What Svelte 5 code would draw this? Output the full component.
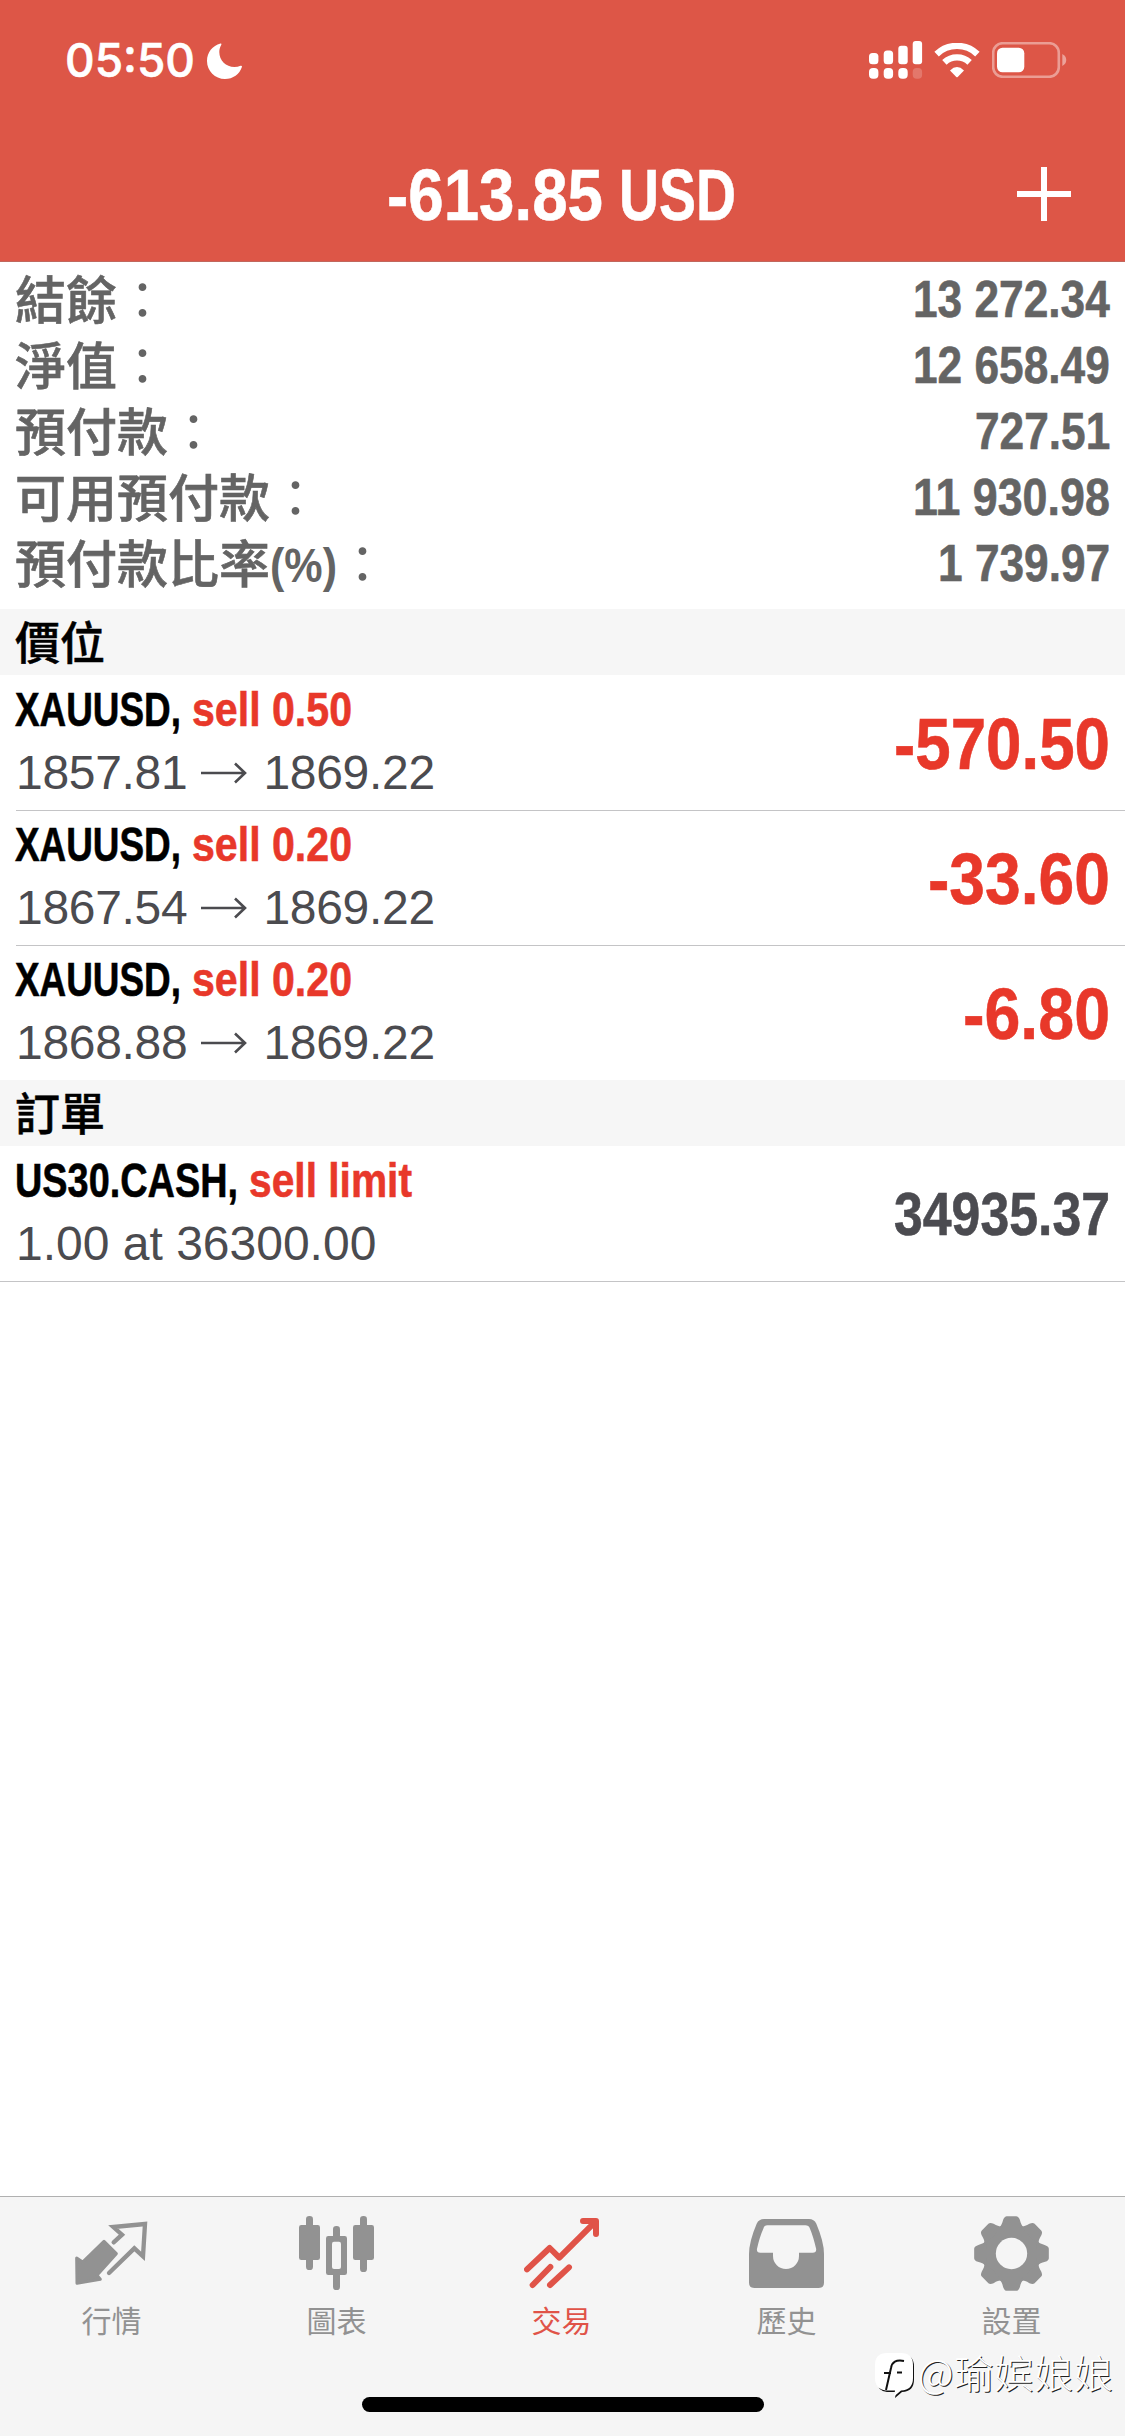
<script lang="ts">
	interface Position {
		symbol: string;
		symbolWidth: number;
		action: string;
		open: string;
		current: string;
		profit: string;
		profitWidth: number;
	}

	const account = [
		{ label: '結餘', unit: '', value: '13 272.34' },
		{ label: '淨值', unit: '', value: '12 658.49' },
		{ label: '預付款', unit: '', value: '727.51' },
		{ label: '可用預付款', unit: '', value: '11 930.98' },
		{ label: '預付款比率', unit: '(%)', value: '1 739.97' }
	];

	const positions: Position[] = [
		{ symbol: 'XAUUSD,', symbolWidth: 166, action: 'sell 0.50', open: '1857.81', current: '1869.22', profit: '-570.50', profitWidth: 216 },
		{ symbol: 'XAUUSD,', symbolWidth: 166, action: 'sell 0.20', open: '1867.54', current: '1869.22', profit: '-33.60', profitWidth: 182 },
		{ symbol: 'XAUUSD,', symbolWidth: 166, action: 'sell 0.20', open: '1868.88', current: '1869.22', profit: '-6.80', profitWidth: 147 }
	];

	const tabs = [
		{ id: 'quotes', label: '行情' },
		{ id: 'chart', label: '圖表' },
		{ id: 'trade', label: '交易' },
		{ id: 'history', label: '歷史' },
		{ id: 'settings', label: '設置' }
	];

	const active = 'trade';
	const teeth = [0, 45, 90, 135, 180, 225, 270, 315];

	// digits take 24.6px, spaces and dots half of that
	function valueWidth(value: string) {
		const digits = value.replace(/\D/g, '').length;
		return digits * 24.6 + (value.length - digits) * 12.3;
	}

	// condense a line of text to the given width
	function squeeze(node: HTMLElement, width: number) {
		const natural = node.getBoundingClientRect().width;
		node.style.transform = `scaleX(${width / natural})`;
	}
</script>

{#snippet fit(text: string, width: number, cls: string)}
	<span class="fit {cls}" style:width="{width}px"><span use:squeeze={width}>{text}</span></span>
{/snippet}

<div class="screen">
	<header>
		<div class="status">
			<div class="clock">
				{@render fit('05:50', 130, 'time')}
				<svg class="moon" viewBox="0 0 35 36">
					<path d="M13.5 0.6C5.5 2.6 0 9.6 0 18c0 10 8 18 18 18 8 0 14.600-4.800 16.900-12 .3-1-.4-1.600-1.300-1.200-2 .8-4 1.200-6.200 1.200C19 24 12.300 17.500 12.300 9c0-2.500.6-4.900 1.900-7.100C14.800.9 14.400.4 13.500.6z" />
				</svg>
			</div>
			<div class="indicators">
				<svg class="signal" viewBox="0 0 54 38">
					<rect x="0" y="12" width="9.400" height="11.300" rx="3.500" />
					<rect x="14.700" y="9.400" width="9.400" height="13.900" rx="3.500" />
					<rect x="29.300" y="4.700" width="9.400" height="18.600" rx="3" />
					<rect x="43.700" y="0" width="9.400" height="23.300" rx="3" />
					<rect x="0" y="27" width="9.400" height="10.700" rx="4" />
					<rect x="14.700" y="27" width="9.400" height="10.700" rx="4" />
					<rect x="29.300" y="27" width="9.400" height="10.700" rx="4" />
					<rect x="43.700" y="27" width="9.400" height="10.700" rx="4" opacity="0.2" />
				</svg>
				<svg class="wifi" viewBox="0 0 46 35">
					<path d="M2.600 11.100a29.500 29.500 0 0 1 40.800 0" fill="none" stroke="#fff" stroke-width="6.400" />
					<path d="M10.400 19.400a18.300 18.300 0 0 1 25.200 0" fill="none" stroke="#fff" stroke-width="6.400" />
					<path d="M16 27.400q7-6.800 14 0L23.700 34q-.7.600-1.400 0z" />
				</svg>
				<svg class="battery" viewBox="0 0 75 36">
					<rect x="1.200" y="1.200" width="65.600" height="33.600" rx="9.500" fill="none" stroke="#fff" stroke-opacity="0.42" stroke-width="2.600" />
					<rect x="5" y="5.700" width="27.300" height="24.600" rx="5.500" />
					<path d="M70.300 12c5.300 2.500 5.300 9.500 0 12z" opacity="0.45" />
				</svg>
			</div>
		</div>
		<div class="titlebar">
			<div class="total">
				{@render fit('-613.85', 216, 'title')}
				{@render fit('USD', 117, 'title')}
			</div>
			<svg class="plus" viewBox="0 0 54 54"><path d="M24 0h6v24h24v6H30v24h-6V30H0v-6h24z" /></svg>
		</div>
	</header>

	<main>
		<section class="account">
			{#each account as row}
				<div class="account-row">
					<div class="label">
						<span>{row.label}</span>
						{#if row.unit}
							{@render fit(row.unit, 67, 'unit')}
						{/if}
						<span class="colon">：</span>
					</div>
					{@render fit(row.value, valueWidth(row.value), 'amount')}
				</div>
			{/each}
		</section>

		<h2>價位</h2>
		<ul>
			{#each positions as p}
				<li>
					<div class="info">
						<div class="name">
							{@render fit(p.symbol, p.symbolWidth, 'symbol')}
							{@render fit(p.action, 160, 'action')}
						</div>
						<div class="prices">
							<span>{p.open}</span>
							<svg class="arrow" viewBox="0 0 46 22"><path d="M0 11h44M34 1.500l10 9.500-10 9.500" /></svg>
							<span>{p.current}</span>
						</div>
					</div>
					<div class="profit">{@render fit(p.profit, p.profitWidth, 'big')}</div>
				</li>
			{/each}
		</ul>

		<h2>訂單</h2>
		<ul class="orders">
			<li>
				<div class="info">
					<div class="name">
						{@render fit('US30.CASH,', 223, 'symbol')}
						{@render fit('sell limit', 163, 'action')}
					</div>
					<div class="prices pending">1.00 at 36300.00</div>
				</div>
				<div class="profit">{@render fit('34935.37', 216, 'market')}</div>
			</li>
		</ul>
	</main>

	<footer>
		<nav>
			{#each tabs as tab}
				<div class="tab" class:active={tab.id === active}>
					{#if tab.id === 'quotes'}
						<svg class="icon" viewBox="222 108 225 225">
							<path d="M312 184L349 221 291 286 301 298 231 310 230 234 248 246z" stroke="currentColor" stroke-width="9" stroke-linejoin="round" />
							<path d="M341 187L366 164 340 141 435 132 429 229 403 205 327 279" fill="none" stroke="currentColor" stroke-width="13" stroke-linecap="round" />
						</svg>
					{:else if tab.id === 'chart'}
						<svg class="icon" viewBox="897 108 225 225">
							<rect x="897" y="135" width="63" height="105" rx="7" />
							<rect x="918" y="108" width="21" height="162" rx="10" />
							<rect x="999" y="138" width="21" height="192" rx="10" />
							<rect x="978" y="168" width="63" height="117" rx="7" />
							<rect class="hole" x="996" y="185" width="27" height="82" rx="6" />
							<rect x="1059" y="135" width="63" height="105" rx="7" />
							<rect x="1080" y="108" width="21" height="168" rx="10" />
						</svg>
					{:else if tab.id === 'trade'}
						<svg class="icon" viewBox="192 108 225 225" stroke="currentColor" stroke-width="18" stroke-linecap="round" stroke-linejoin="round">
							<path fill="none" d="M201 268L269 204 298 233 404 127M369 123H408V162M218 315L271 261M270 315L327 262" />
							<path stroke="none" d="M385 123H408V147z" />
						</svg>
					{:else if tab.id === 'history'}
						<svg class="icon" viewBox="867 108 225 225">
							<path fill-rule="evenodd" d="M912 117H1047Q1062 117 1069 131Q1092 185 1092 222V308Q1092 324 1076 324H883Q867 324 867 308V222Q867 185 890 131Q897 117 912 117zM922 136Q913 136 910 146Q899 170 891 206Q889 218 901 218H939V228A39 39 0 0 0 1017 228V218H1058Q1071 218 1068 205Q1060 170 1050 146Q1046 136 1036 136z" />
						</svg>
					{:else}
						<svg class="icon" viewBox="-112.500 -112.500 225 225">
							<circle r="88" />
							{#each teeth as angle}
								<path transform="rotate({angle})" d="M-38-76C-30-84-28-90-25-101Q-21-112-14-112H14Q21-112 25-101C28-90 30-84 38-76z" />
							{/each}
							<circle class="hole" r="47" />
						</svg>
					{/if}
					<span>{tab.label}</span>
				</div>
			{/each}
		</nav>
		<div class="home"></div>
	</footer>

	<div class="watermark">
		<svg viewBox="0 0 40 47">
			<path class="shade" d="M13 1.500h14q12 0 12 12v13q0 12-12 12.500l-7 6 1-6h-9q-10-1-10-12V13q0-11.500 11-11.500z" />
			<path class="bubble" d="M12 0h14q12 0 12 12v13q0 12-12 12.500l-7 6 1-6h-9Q0 36 0 25V12Q0 0 12 0z" />
			<path class="mark" d="M29 8c-8-1.500-12 1-13 7L11 37M9 20h7M22 19.500h5" />
		</svg>
		<span>@瑜嫔娘娘</span>
	</div>
</div>

<style>
	:global(body) {
		background: #fff;
	}

	.screen {
		position: relative;
		display: flex;
		flex-direction: column;
		width: 1125px;
		height: 2436px;
		overflow: hidden;
		background: #fff;
		font-family: "Liberation Sans", "Noto Sans CJK TC", sans-serif;
	}

	svg {
		display: block;
		flex: none;
		fill: currentColor;
	}

	.fit {
		display: block;
		flex: none;
		font-family: "Liberation Sans", sans-serif;
		font-weight: bold;
		line-height: 1.307;
		white-space: pre;
		-webkit-text-stroke: 0.6px currentColor;
	}

	.fit span {
		display: inline-block;
		transform-origin: 0 0;
	}

	header {
		box-sizing: border-box;
		height: 262px;
		color: #fff;
		background: #dd5647;
		border-bottom: 1px solid #c1675d;
	}

	.status {
		display: flex;
		justify-content: space-between;
		height: 130px;
		padding: 0 58px 0 65px;
	}

	.clock {
		display: flex;
		gap: 12px;
		padding-top: 30px;
	}

	.time {
		font-family: Inter, sans-serif;
		font-size: 47px;
		font-weight: 500;
		line-height: 1.2725;
	}

	.moon {
		width: 35px;
		height: 36px;
		margin-top: 13px;
	}

	.indicators {
		display: flex;
		padding-top: 41px;
	}

	.signal {
		width: 54px;
		height: 38px;
		margin-right: 11px;
	}

	.wifi {
		width: 46px;
		height: 35px;
		margin: 1.500px 12px 0 0;
	}

	.battery {
		width: 75px;
		height: 36px;
		margin-top: 1px;
	}

	.titlebar {
		display: flex;
		justify-content: space-between;
		padding: 17px 54px 0 387px;
	}

	.total {
		display: flex;
		gap: 16px;
	}

	.title {
		font-size: 73px;
	}

	.plus {
		width: 54px;
		height: 54px;
		margin-top: 20px;
	}

	.account {
		padding: 4px 15px 13px 15px;
		color: #646464;
	}

	.account-row {
		display: flex;
		justify-content: space-between;
		height: 66px;
	}

	.label {
		display: flex;
		margin-top: -2px;
		font: 500 51px/66px "Noto Sans CJK TC", sans-serif;
		-webkit-text-stroke: 0.6px currentColor;
	}

	.colon {
		font-weight: 400;
		-webkit-text-stroke: 0;
	}

	.unit {
		margin-top: 5px;
		font-size: 49px;
		-webkit-text-stroke: 0;
	}

	.amount {
		margin-top: 1px;
		font-size: 51px;
	}

	h2 {
		height: 66px;
		margin: 0;
		padding-left: 15px;
		background: #f6f6f6;
		color: #000;
		font: 500 45px/64px "Noto Sans CJK TC", sans-serif;
		-webkit-text-stroke: 0.5px currentColor;
	}

	ul {
		margin: 0;
		padding: 0 0 0 16px;
		list-style: none;
	}

	li {
		box-sizing: border-box;
		display: flex;
		justify-content: space-between;
		height: 135px;
		padding-right: 15px;
	}

	li + li {
		border-top: 1px solid #c4c4c6;
	}

	li + li .info,
	li + li .profit {
		margin-top: -1px;
	}

	.orders {
		padding-left: 0;
		border-bottom: 1px solid #c4c4c6;
	}

	.orders li {
		padding-left: 16px;
	}

	.name {
		display: flex;
		gap: 11px;
		height: 61px;
		padding-top: 2px;
		margin-left: -1px;
	}

	.symbol {
		font-size: 49px;
		color: #000;
	}

	.action {
		font-size: 49px;
		color: #e8382a;
	}

	.prices {
		display: flex;
		align-items: center;
		color: #4b4b4f;
		font-size: 48px;
		line-height: 70px;
		letter-spacing: -0.3px;
		white-space: pre;
	}

	.pending {
		letter-spacing: 0;
	}

	.arrow {
		width: 46px;
		height: 22px;
		margin: 0 16px 0 14px;
		fill: none;
		stroke: currentColor;
		stroke-width: 2.600;
	}

	.profit {
		display: flex;
		padding-top: 21px;
	}

	.big {
		font-size: 73px;
		color: #e8382a;
	}

	.market {
		margin-top: 8px;
		font-size: 61px;
		color: #4b4b50;
	}

	footer {
		box-sizing: border-box;
		height: 240px;
		margin-top: auto;
		border-top: 1px solid #b0b0b0;
		background: #f5f5f5;
	}

	nav {
		display: flex;
		height: 200px;
		margin-left: -1px;
	}

	.tab {
		display: flex;
		flex: none;
		flex-direction: column;
		align-items: center;
		width: 225px;
		padding-top: 19px;
		color: #929292;
	}

	.tab.active {
		color: #e05348;
	}

	.tab span {
		margin-top: 6px;
		font: 400 30px/44px "Noto Sans CJK TC", sans-serif;
	}

	.icon {
		width: 75px;
		height: 75px;
	}

	.hole {
		fill: #f5f5f5;
	}

	.home {
		width: 402px;
		height: 15px;
		margin: 0 auto;
		border-radius: 8px;
		background: #000;
	}

	.watermark {
		position: absolute;
		right: 11px;
		bottom: 36px;
		display: flex;
		align-items: center;
		gap: 3px;
		color: #fff;
		font: 300 39px/50px "Noto Sans CJK SC", sans-serif;
		text-shadow: 1px 1px 0 #222;
	}

	.watermark span {
		margin-top: -12px;
		letter-spacing: 0.9px;
	}

	.watermark svg {
		width: 40px;
		height: 47px;
	}

	.shade {
		fill: #111;
	}

	.bubble {
		fill: #fff;
	}

	.mark {
		fill: none;
		stroke: #111;
		stroke-width: 2;
	}
</style>
